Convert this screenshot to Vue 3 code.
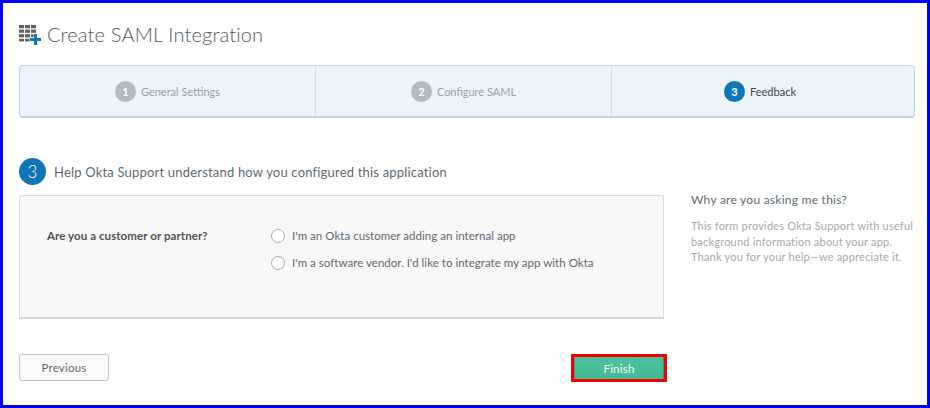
<script setup>
const steps = [
  { n: 1, label: 'General Settings' },
  { n: 2, label: 'Configure SAML' },
  { n: 3, label: 'Feedback', active: true },
]
const options = [
  "I'm an Okta customer adding an internal app",
  "I'm a software vendor. I'd like to integrate my app with Okta",
]
</script>

<template>
  <div class="frame">
    <header class="title">
      <svg class="title-icon" width="24" height="22" viewBox="0 0 24 22">
        <g fill="#5f5f5f">
          <rect x="0" y="1" width="5" height="3.2" />
          <rect x="6" y="1" width="5" height="3.2" />
          <rect x="12" y="1" width="5" height="3.2" />
          <rect x="0" y="5.6" width="5" height="3.2" />
          <rect x="6" y="5.6" width="5" height="3.2" />
          <rect x="12" y="5.6" width="5" height="3.2" />
          <rect x="0" y="10.2" width="5" height="3.2" />
          <rect x="6" y="10.2" width="5" height="3.2" />
          <rect x="12" y="10.2" width="5" height="3.2" />
          <rect x="0" y="14.8" width="5" height="2.6" />
          <rect x="6" y="14.8" width="5" height="2.6" />
        </g>
        <path d="M15 10h3v4h4v3h-4v4h-3v-4h-4v-3h4z" fill="#0e7ab8" stroke="#fff" stroke-width="1" paint-order="stroke" />
      </svg>
      <h1>Create SAML Integration</h1>
    </header>

    <ol class="steps">
      <li v-for="s in steps" :key="s.n" class="step" :class="{ active: s.active }">
        <span class="badge">{{ s.n }}</span>
        <span class="step-label">{{ s.label }}</span>
      </li>
    </ol>

    <div class="content">
      <main class="main">
        <div class="heading">
          <span class="big-num">3</span>
          <h2>Help Okta Support understand how you configured this application</h2>
        </div>
        <section class="panel">
          <div class="question">Are you a customer or partner?</div>
          <div class="choices">
            <label v-for="o in options" :key="o" class="choice">
              <span class="radio"></span>
              <span>{{ o }}</span>
            </label>
          </div>
        </section>
        <div class="actions">
          <button class="btn">Previous</button>
          <button class="btn primary">Finish</button>
        </div>
      </main>
      <aside class="aside">
        <h3>Why are you asking me this?</h3>
        <p>This form provides Okta Support with useful background information about your app. Thank you for your help—we appreciate it.</p>
      </aside>
    </div>
  </div>
</template>

<style>
html, body { margin: 0; background: #fff; overflow: hidden; }
</style>

<style scoped>
.frame {
  box-sizing: border-box;
  width: 930px;
  height: 408px;
  border: 3px solid #0000f5;
  padding: 0 12px 0 16px;
  background: #fff;
  font-family: Lato, "Liberation Sans", sans-serif;
  color: #5e5e5e;
  overflow: hidden;
}
.title {
  display: flex;
  align-items: center;
  height: 62px;
  gap: 4px;
}
.title-icon { margin-top: 2px; flex: none; }
h1 {
  margin: 0;
  font-size: 20px;
  font-weight: 300;
  letter-spacing: 0.16px;
  color: #4f5a62;
}
.steps {
  display: flex;
  list-style: none;
  margin: 0;
  padding: 0;
  height: 53px;
  box-sizing: border-box;
  border: 1px solid #c6d2dc;
  border-bottom-width: 2px;
  border-radius: 4px;
  background: #ecf4fb;
}
.step {
  flex: 0 0 295px;
  display: flex;
  align-items: center;
  justify-content: center;
  gap: 5px;
  font-size: 11px;
  color: #9aa0a4;
  border-left: 1px solid #d0dde6;
}
.step:first-child { border-left: 0; }
.step:last-child { flex: 1; padding-right: 6px; }
.badge {
  width: 21px;
  height: 21px;
  border-radius: 50%;
  background: #b1bbc1;
  color: #fff;
  display: flex;
  align-items: center;
  justify-content: center;
  font-size: 11px;
  font-weight: 700;
}
.step.active { color: #3a4650; }
.step.active .badge { background: #0f76b5; }
.content {
  display: flex;
  margin-top: 40px;
}
.main { width: 645px; flex: none; }
.heading {
  display: flex;
  align-items: center;
  gap: 8px;
  height: 27px;
}
.big-num {
  width: 27px;
  height: 27px;
  border-radius: 50%;
  background: #0f76b5;
  color: #fff;
  display: flex;
  align-items: center;
  justify-content: center;
  font-size: 17px;
  font-weight: 300;
}
h2 {
  margin: 0;
  font-size: 13px;
  font-weight: 400;
  letter-spacing: 0.19px;
  color: #5e6a72;
}
.panel {
  box-sizing: border-box;
  height: 124px;
  margin-top: 10px;
  padding: 26px 0 0 27px;
  display: flex;
  background: #f8f8f8;
  border: 1px solid #dadada;
  border-bottom: 2px solid #d6d6d6;
  border-radius: 3px 3px 0 0;
}
.question {
  width: 224px;
  flex: none;
  font-size: 11.5px;
  font-weight: 700;
  color: #4e5458;
  line-height: 27px;
  letter-spacing: 0.08px;
}
.choices { display: flex; flex-direction: column; }
.choice {
  display: flex;
  align-items: center;
  gap: 7px;
  height: 27px;
  font-size: 11.5px;
  letter-spacing: 0.03px;
  color: #62696e;
}
.radio {
  box-sizing: border-box;
  width: 14px;
  height: 14px;
  border-radius: 50%;
  border: 1.5px solid #ababab;
  background: #fff;
}
.actions {
  display: flex;
  justify-content: space-between;
  align-items: flex-start;
  margin-top: 35px;
  width: 648px;
}
.btn {
  box-sizing: border-box;
  width: 90px;
  height: 27px;
  border: 1px solid #c4c4c4;
  border-radius: 3px;
  background: #fafafa;
  color: #5e6a72;
  font: 400 11.5px Lato, "Liberation Sans", sans-serif;
  letter-spacing: 0.2px;
  padding: 0;
}
.btn.primary {
  width: 96px;
  height: 28px;
  border: 3px solid #f00000;
  border-radius: 0;
  background: linear-gradient(#4cc29f, #45b994);
  box-shadow: inset 1px 0 0 #3d8f76, inset -1px 0 0 #3d8f76;
  color: #fff;
}
.aside {
  margin-left: 27px;
  width: 240px;
  padding-top: 34px;
  flex: none;
}
h3 {
  margin: 0 0 11px;
  font-size: 12px;
  font-weight: 400;
  letter-spacing: 0.25px;
  color: #5e6a72;
}
p {
  margin: 0;
  font-size: 11px;
  line-height: 15.5px;
  color: #a5aaae;
  letter-spacing: 0.2px;
  width: 226px;
}
</style>
